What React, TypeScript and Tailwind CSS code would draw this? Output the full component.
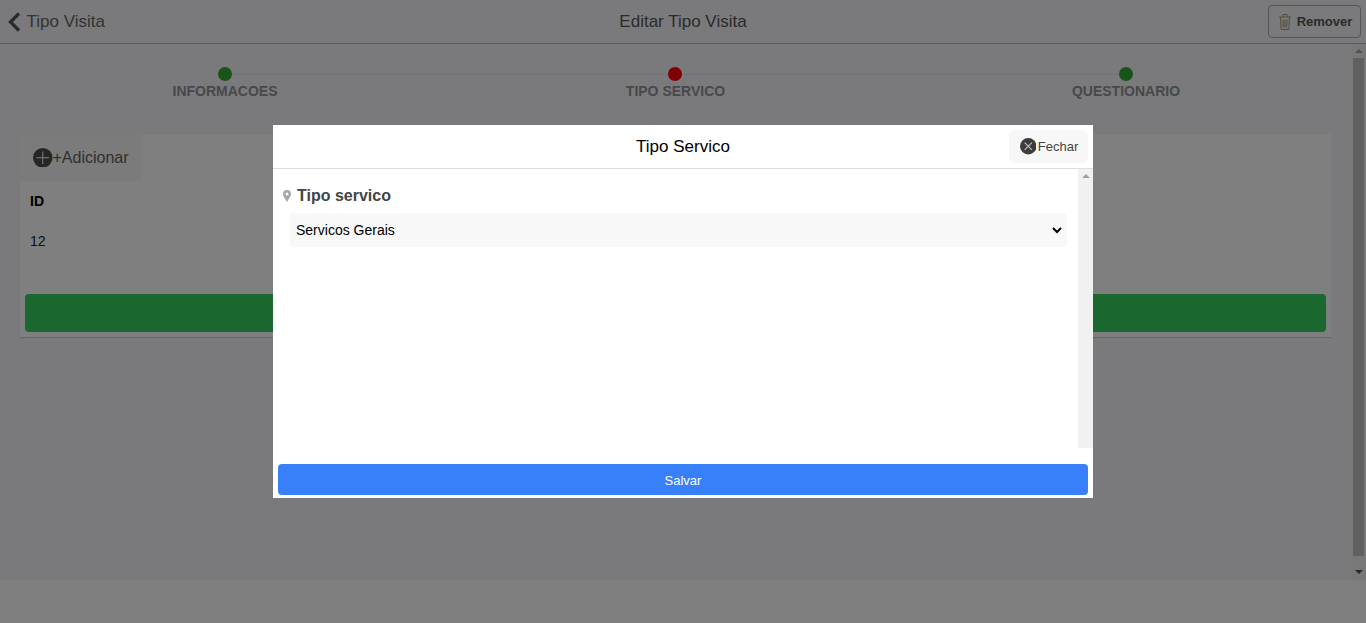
const font = "font-['Liberation_Sans',Arial,sans-serif]";

function Step({ color, label, dot = '' }: { color: string; label: string; dot?: string }) {
  return (
    <div className="relative flex w-[300px] flex-col items-center">
      <span className={`mt-[23px] size-[14px] rounded-full ${color} ${dot}`} />
      <span className="mt-[2px] text-sm leading-[16px] font-bold text-[#8f9094]">{label}</span>
    </div>
  );
}

function BackIcon() {
  return (
    <svg viewBox="0 0 13 20" className="h-[20px] w-[13px]" fill="none" stroke="#555" strokeWidth="3.300">
      <path d="M11 1.500L2.500 10l8.500 8.500" />
    </svg>
  );
}

function TrashIcon() {
  return (
    <svg viewBox="0 0 12 16" className="h-[16px] w-[12px]" fill="none" stroke="#ad9870" strokeWidth="1">
      <path d="M0 3h12M4 3V.500h4V3M1.500 3l.7 12.500h7.600L10.500 3M4 5.500l.3 8M6 5.500v8M8 5.500l-.3 8" />
    </svg>
  );
}

function CloseCircle() {
  return (
    <svg viewBox="0 0 16 16" className="size-[16.500px]">
      <circle cx="8" cy="8" r="8" fill="#3d3d3d" />
      <path d="M4.500 4.500l7 7M11.500 4.500l-7 7" stroke="#c8c8c8" strokeWidth="1" />
    </svg>
  );
}

function PlusCircle() {
  return (
    <svg viewBox="0 0 20 20" className="size-[19.500px]">
      <circle cx="10" cy="10" r="10" fill="#4c4c4c" />
      <path d="M10 3.500v13M3.500 10h13" stroke="#fff" strokeWidth="1" />
    </svg>
  );
}

function PageScrollbar() {
  return (
    <div className="flex w-[15px] shrink-0 flex-col items-center bg-[#f1f1f1]">
      <span className="mt-[5px] size-0 border-x-[4px] border-b-[4px] border-x-transparent border-b-[#a3a3a3]" />
      <div className="mt-[5px] w-[11px] flex-1 bg-[#c1c1c1]" />
      <div className="flex h-[24px] items-end justify-center pb-[6px]">
        <span className="size-0 border-x-[4px] border-t-[4px] border-x-transparent border-t-[#505050]" />
      </div>
    </div>
  );
}

export default function App() {
  return (
    <div className={`relative flex h-[623px] flex-col overflow-hidden bg-white ${font}`}>
      <div className="flex h-[580px] flex-col bg-[#f4f5f8]">
        <header className="flex h-[44px] shrink-0 items-center justify-between border-b border-[#b8b8b8] pr-[5px] pl-[8px]">
          <div className="flex w-[297px] items-center gap-[5.500px] text-[#666]">
            <BackIcon />
            <span className="text-[17px]">Tipo Visita</span>
          </div>
          <h1 className="text-[17px] text-[#555]">Editar Tipo Visita</h1>
          <div className="flex w-[300px] justify-end">
            <button className="flex h-[33px] w-[93px] items-center justify-center gap-[6px] rounded border border-[#ababab] pl-[2px] text-[13px] font-bold text-[#555]">
              <TrashIcon />
              Remover
            </button>
          </div>
        </header>
        <div className="flex min-h-0 flex-1">
          <main className="min-w-0 flex-1 px-[20px]">
            <div className="relative flex justify-between px-[55px]">
              <div className="absolute top-[30px] right-[200px] left-[200px] h-px bg-[#e6e6e6]" />
              <Step color="bg-[#35a835]" label="INFORMACOES" />
              <Step color="bg-[#ff0000]" label="TIPO SERVICO" dot="-translate-x-px" />
              <Step color="bg-[#35a835]" label="QUESTIONARIO" />
            </div>
            <section className="mt-[35px] h-[204px] border-b border-[#cccccc] bg-white">
              <div className="flex h-[47px] w-[122px] items-center bg-[#f7f7f7] pl-[13px] text-base text-[#606060]">
                <PlusCircle />
                +Adicionar
              </div>
              <div className="px-[10px]">
                <div className="mt-[10px] text-sm leading-[20px] font-bold text-black">ID</div>
                <div className="mt-[20px] text-sm leading-[20px] text-[#10233f]">12</div>
              </div>
              <div className="mx-[5px] mt-[43px] h-[38px] rounded bg-[#35ce5f]" />
            </section>
          </main>
          <PageScrollbar />
        </div>
      </div>

      <div className="absolute inset-0 flex items-start justify-center bg-black/50">
        <div className="mt-[125px] flex h-[373px] w-[820px] flex-col bg-white">
          <div className="flex h-[44px] shrink-0 items-center border-b border-[#dedede] pr-[5px]">
            <h2 className="flex-1 pl-[84px] text-center text-[17px] text-black">Tipo Servico</h2>
            <button className="flex h-[33px] w-[79px] items-center justify-center gap-[1.500px] rounded-md bg-[#f7f7f7] pl-[1px] text-[13px] text-[#444]">
              <CloseCircle />
              Fechar
            </button>
          </div>
          <div className="flex h-[279px] shrink-0">
            <div className="min-w-0 flex-1 pt-[18px] pr-[11px] pl-[10px]">
              <div className="flex items-center gap-[6px] text-base leading-[18px] font-bold text-[#444]">
                <svg viewBox="0 0 8 12" className="h-[12px] w-[8px]">
                  <path fillRule="evenodd" fill="#a8a8a8" d="M4 0a4 4 0 0 1 4 4c0 2.500-3 6-4 8C3 10 0 6.500 0 4a4 4 0 0 1 4-4zm0 2.500a1.500 1.500 0 1 0 0 3 1.500 1.500 0 0 0 0-3z" />
                </svg>
                Tipo servico
              </div>
              <select className="mt-[8px] ml-[7px] h-[34px] w-[777px] rounded border-r-2 border-transparent bg-[#f8f8f8] pl-[2px] text-sm text-black outline-none">
                <option>Servicos Gerais</option>
              </select>
            </div>
            <div className="flex w-[15px] shrink-0 justify-center bg-[#f1f1f1] pt-[5px]">
              <span className="size-0 border-x-[4px] border-b-[4px] border-x-transparent border-b-[#a3a3a3]" />
            </div>
          </div>
          <div className="px-[5px] pt-[16px]">
            <button className="h-[31px] w-full rounded bg-[#3880fa] pt-[2px] text-[13px] text-white">Salvar</button>
          </div>
        </div>
      </div>
    </div>
  );
}
